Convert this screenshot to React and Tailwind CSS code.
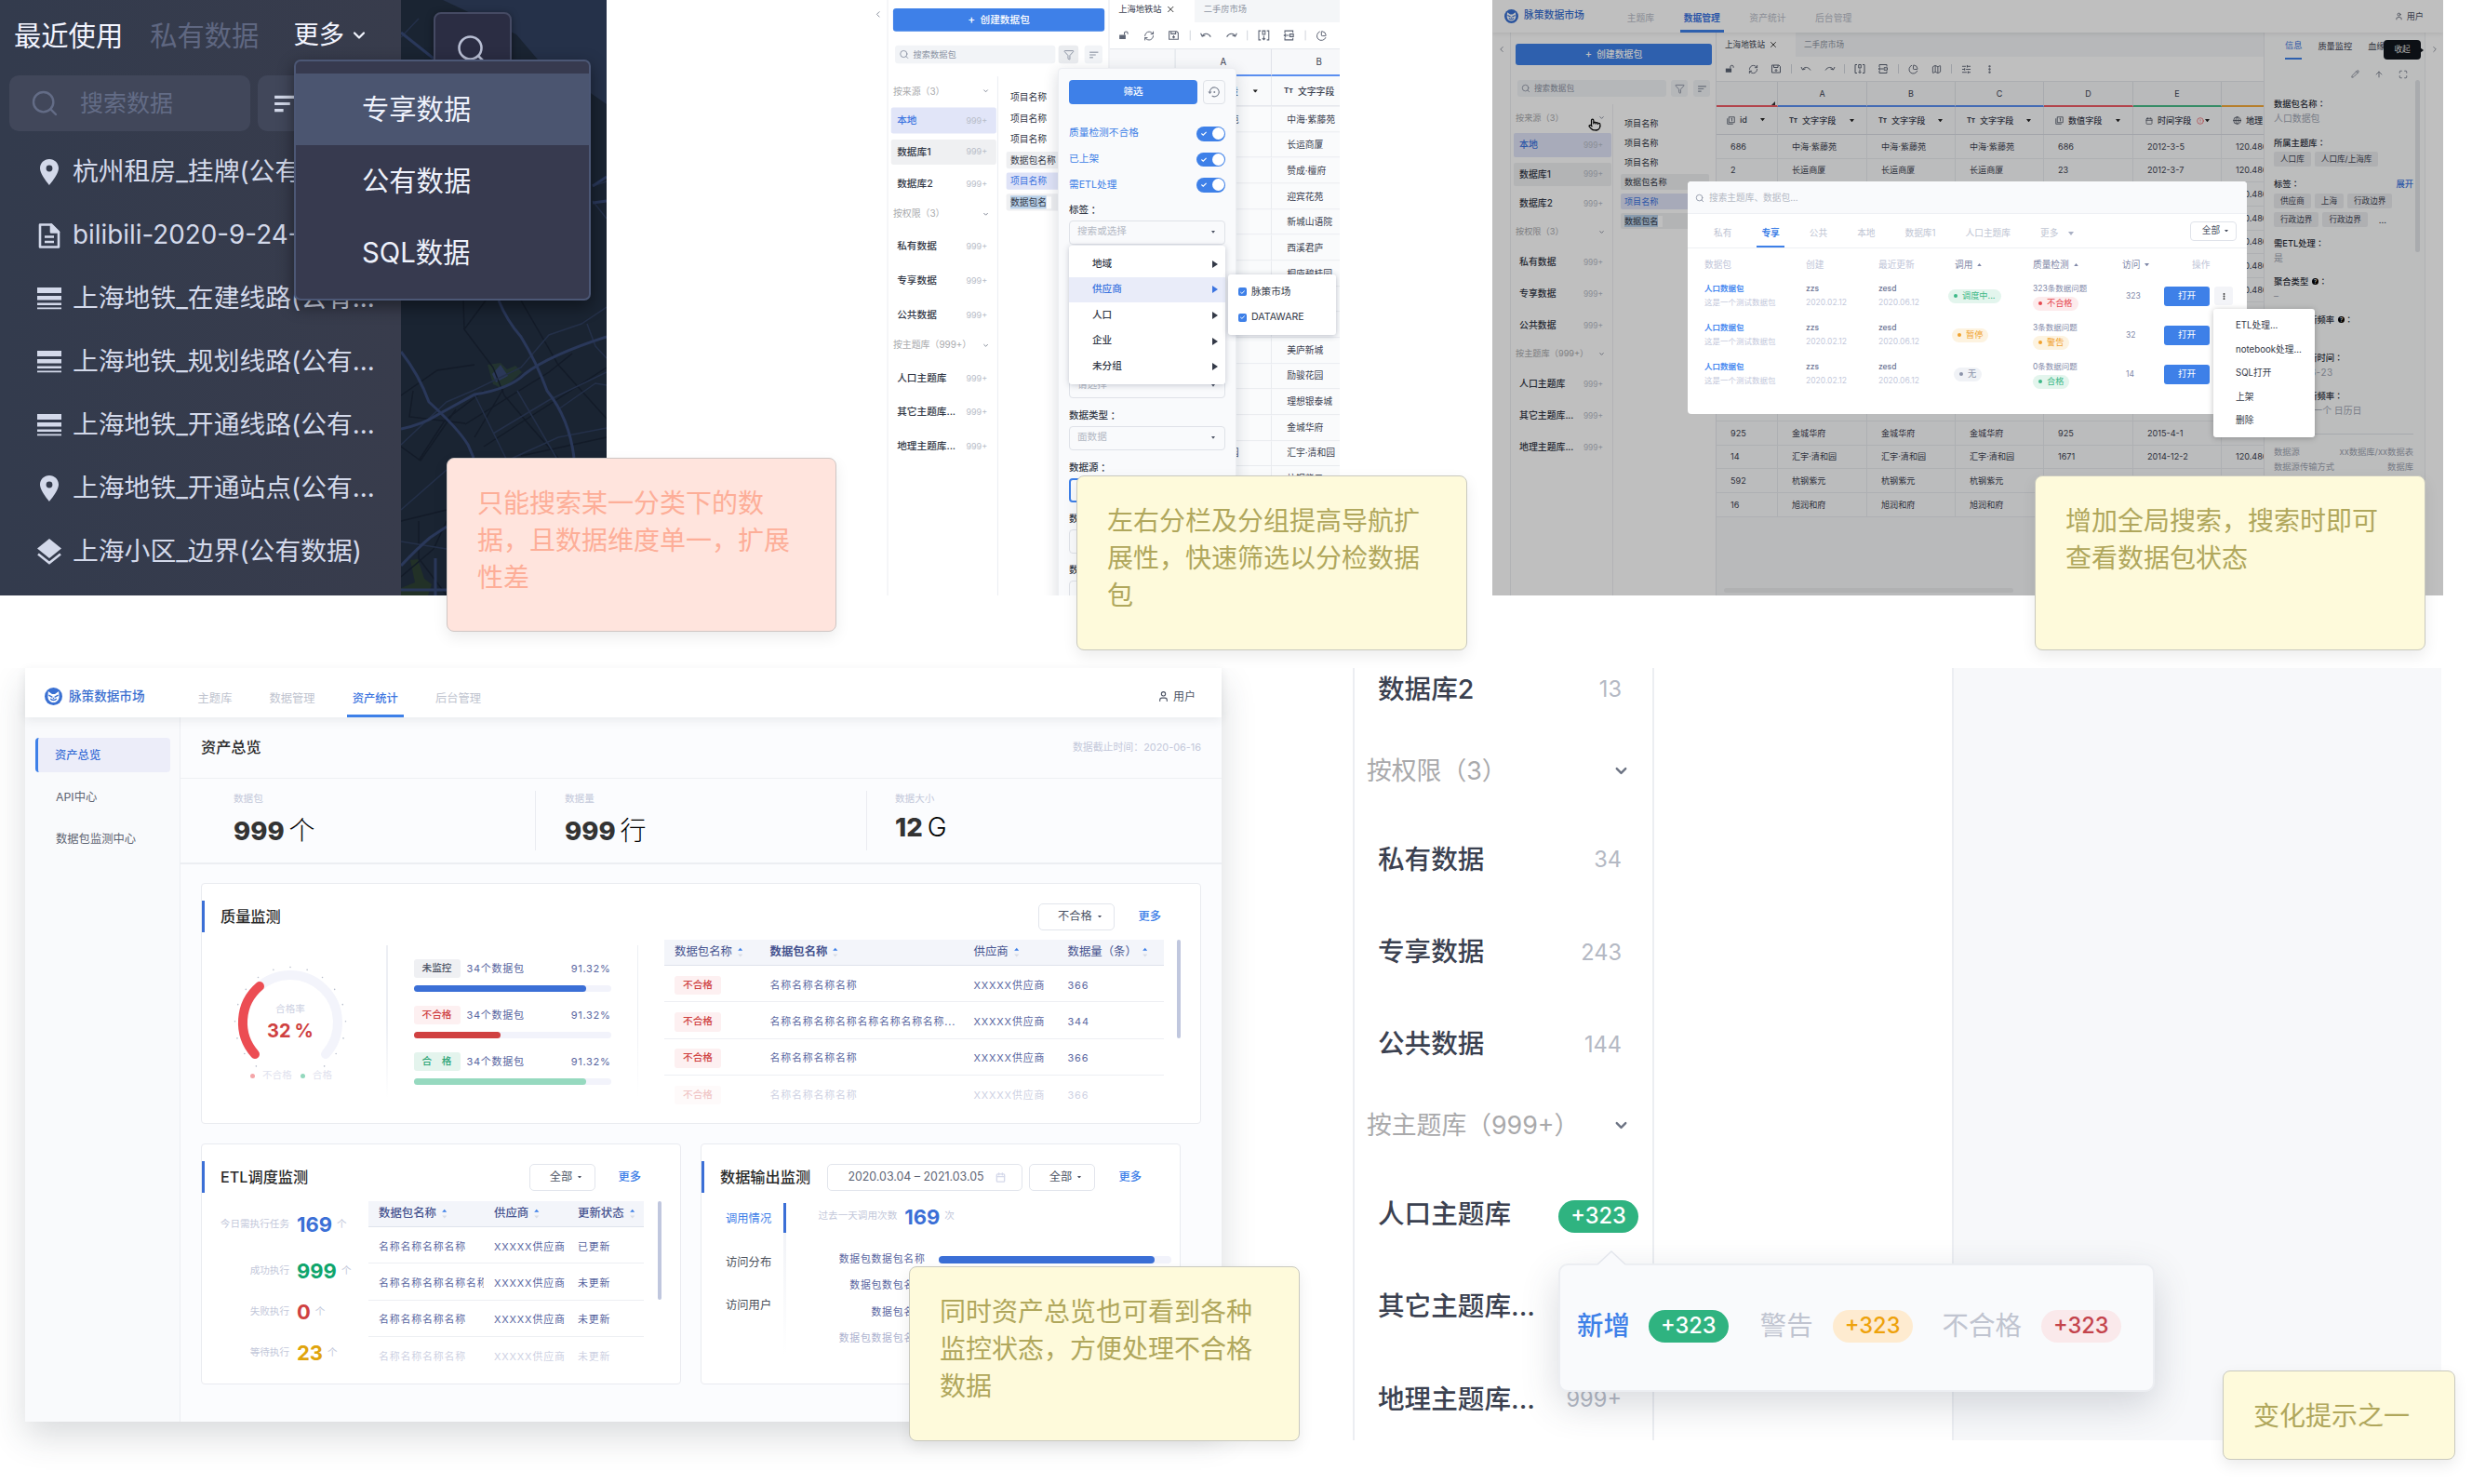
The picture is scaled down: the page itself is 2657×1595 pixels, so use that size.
import React from "react";
import {
  Search, ChevronDown, ChevronLeft, ChevronRight, RefreshCw, PieChart, Map as MapIcon,
  SlidersHorizontal, MoreVertical, Filter, User, X, Pencil, ArrowUp, Maximize, Globe, Calendar,
  CircleAlert, Pointer,
} from "lucide-react";

/* ---------- shared pieces ---------- */

function Note({ className, lines }) {
  return (
    <div className={"absolute rounded-[8px] border pl-[32px] text-[28px] leading-[40px] shadow-[0_6px_16px_rgba(0,0,0,0.08)] " + className}>
      {lines.map((l) => (
        <p key={l}>{l}</p>
      ))}
    </div>
  );
}

function Colon() {
  return <span className="font-['Noto_Sans_CJK_TC',sans-serif]">：</span>;
}

function Logo({ className }) {
  return (
    <svg viewBox="0 0 20 20" className={className}>
      <circle cx="10" cy="10" r="10" fill="#3a70d2" />
      <path d="M4 4.2 L8.4 7.4 H11.6 L16 4.2 L16.4 11 C15.8 14.8 13 16.8 10 16.8 C7 16.8 4.2 14.8 3.6 11 Z" fill="#fff" />
      <path d="M4.6 8.6 L8.8 10.8 M15.4 8.6 L11.2 10.8 M6.6 12.6 C8 14.8 12 14.8 13.4 12.6" stroke="#3a70d2" strokeWidth="1.5" fill="none" />
      <path d="M8.8 11.4 H11.2 L10 13.2 Z" fill="#3a70d2" />
    </svg>
  );
}

function Caret({ className = "w-[5px] text-[#4b5263]", up = false }) {
  return (
    <svg viewBox="0 0 6 4" className={"shrink-0 " + className}>
      <path d={up ? "M0 4 L3 0 L6 4Z" : "M0 0 L3 4 L6 0Z"} fill="currentColor" />
    </svg>
  );
}

function Sort() {
  return (
    <svg viewBox="0 0 6 12" className="ml-[6px] h-[11px] w-[5.5px] shrink-0">
      <path d="M0.2 4.2 L3 0.8 L5.8 4.2Z" fill="#3e80e8" />
      <path d="M0.2 8.2 L3 11.4 L5.8 8.2Z" fill="#d9dde6" />
    </svg>
  );
}

function SortLines({ className }) {
  return (
    <svg viewBox="0 0 20 16" className={className}>
      <path d="M0 2 H20 M0 8 H14 M0 14 H8" stroke="currentColor" strokeWidth="2.6" />
    </svg>
  );
}

function NumberIcon() {
  return (
    <svg viewBox="0 0 12 12" className="h-[9px] w-[9px] shrink-0" fill="none" stroke="#4b5263" strokeWidth="1.1">
      <path d="M3 1 H11 V9 H3Z M1 3 V11 H9 M6.2 3.4 L7.4 2.8 V7.2" />
    </svg>
  );
}

/* ---------- dark map panel ---------- */

function PinIcon() {
  return (
    <svg viewBox="0 0 20 28" className="h-[28px] w-[20px]">
      <path d="M10 0 C4.4 0 0 4.3 0 9.8 C0 16.5 10 28 10 28 C10 28 20 16.5 20 9.8 C20 4.3 15.6 0 10 0 Z M10 6.6 A3.4 3.4 0 1 1 10 13.4 A3.4 3.4 0 1 1 10 6.6 Z" fill="#d3d9ea" fillRule="evenodd" />
    </svg>
  );
}
function DocIcon() {
  return (
    <svg viewBox="0 0 24 28" className="h-[29px] w-[24px]" fill="none" stroke="#d3d9ea" strokeWidth="2.6" strokeLinejoin="round">
      <path d="M2 2 H14 L22 10 V26 H2 Z M7 15 H17 M7 20.5 H17" />
      <path d="M14 2 L22 10 H14 Z" fill="#d3d9ea" />
    </svg>
  );
}
function LinesIcon() {
  return (
    <svg viewBox="0 0 26 24" className="h-[24px] w-[26px]" fill="#d3d9ea">
      <path d="M0 0 H26 V6 H0Z M0 9 H26 V13.4 H0Z M0 16.4 H26 V19 H0Z M0 21.6 H26 V23.2 H0Z" />
    </svg>
  );
}
function LayersIcon() {
  return (
    <svg viewBox="0 0 26 28" className="h-[28px] w-[26px]">
      <path d="M13 0 L26 10.5 L13 21 L0 10.5Z" fill="#d3d9ea" />
      <path d="M1 16.5 L13 26 L25 16.5" fill="none" stroke="#d3d9ea" strokeWidth="2.6" />
    </svg>
  );
}

const LAYERS = [
  [PinIcon, "杭州租房_挂牌(公有..."],
  [DocIcon, "bilibili-2020-9-24-..."],
  [LinesIcon, "上海地铁_在建线路(公有..."],
  [LinesIcon, "上海地铁_规划线路(公有..."],
  [LinesIcon, "上海地铁_开通线路(公有..."],
  [PinIcon, "上海地铁_开通站点(公有..."],
  [LayersIcon, "上海小区_边界(公有数据)"],
];

function CityMap() {
  return (
    <svg viewBox="431 0 221 640" className="h-full w-full bg-[#1a2432]">
      <path d="M476 0 L555 37 L578 64 L606 80 L652 112 V0 Z" fill="#253149" />
      <path d="M524 392 L538 390 L545 397 L554 393 L561 400 L541 418 L530 413 Z" fill="#22332f" />
      <path d="M529 402 L538 392 L546 404 L533 411Z" fill="#2b3858" />
      <path d="M441 602 L449 601 L456 622 L464 628 L460 640 H431 V632 L446 626Z" fill="#223127" />
      <g fill="none" stroke="#131b28" strokeWidth="1.4">
        <path d="M498 323 L499 354 L530 395 L542 425 L570 458 L600 492" />
        <path d="M560 323 L600 392 L652 450 M499 354 L522 323 M541 418 L510 470 M431 425 L470 398 L510 392" />
        <path d="M444 420 L440 448 L500 455 M450 495 L478 452 L520 420 M431 480 L452 495 L490 440" />
        <path d="M520 480 L652 395 M500 456 L590 400 L615 380 M560 490 L652 470" />
        <path d="M431 620 L466 590 L480 560 M450 560 V600 L480 640 M431 560 L480 548" />
      </g>
      <g fill="none" stroke="#243049" strokeWidth="1.5">
        <path d="M431 478 L480 432 L508 420 L560 395 L590 360 L625 348 L652 330" />
        <path d="M510 424 L545 495 M556 420 L598 492 M530 466 L590 430 L652 400 M545 495 L600 470 L652 460" />
        <path d="M431 548 L480 505 M431 582 L480 590 M431 40 L450 20 M600 440 L640 412 L652 414 M631 348 L640 372 L652 385" />
        <path d="M637 200 L652 195 M637 216 L652 235" />
      </g>
      <g fill="none" stroke="#2a385a" strokeWidth="3">
        <path d="M431 378 Q450 402 461 432 Q492 460 503 478 L509 492" />
        <path d="M431 461 Q455 456 470 446 L510 424 Q548 418 564 402 Q590 382 652 362" />
        <path d="M536 323 Q545 345 560 362 Q577 390 588 420 Q612 450 617 492" />
        <path d="M431 35 L470 66 M431 608 Q448 590 462 578 L480 566 M468 600 V640 M431 634 H480 M637 218 L652 216 M637 200 L652 190" />
      </g>
    </svg>
  );
}

function MapPanel() {
  return (
    <section className="absolute left-0 top-0 flex h-[640px] w-[652px] overflow-hidden text-[#d3d9ea]">
      <div className="w-[431px] shrink-0 overflow-hidden bg-gradient-to-r from-[#333b4d] to-[#383c4c]">
        <div className="flex h-[77px] items-center pl-[15px] text-[29.3px]">
          <span className="text-[#f3f5ff]">最近使用</span>
          <span className="ml-[29px] text-[#5f6781]">私有数据</span>
          <span className="ml-[37px] flex items-center pb-[1px] text-[27.3px] text-[#f3f5ff]">
            更多
            <ChevronDown className="ml-[6px] h-[20px] w-[20px]" strokeWidth={2.6} />
          </span>
        </div>
        <div className="mt-[4px] flex gap-[8px] pl-[10px]">
          <div className="flex h-[60px] w-[259px] shrink-0 items-center rounded-[10px] bg-[#41475a] pl-[22px] text-[25px] text-[#636c86]">
            <Search className="h-[32px] w-[32px]" strokeWidth={1.8} />
            <span className="ml-[22px]">搜索数据</span>
          </div>
          <div className="flex h-[60px] w-[140px] shrink-0 items-center rounded-[10px] bg-[#41475a] pl-[17px]">
            <SortLines className="h-[19px] w-[26px]" />
          </div>
        </div>
        <div className="mt-[10px] text-[27.8px]">
          {LAYERS.map(([Icon, name]) => (
            <div key={name} className="flex h-[68px] items-center">
              <span className="ml-[39px] flex w-[27px] shrink-0 justify-center">
                <Icon />
              </span>
              <span className="ml-[12px]">{name}</span>
            </div>
          ))}
        </div>
      </div>
      <div className="min-w-0 flex-1">
        <CityMap />
      </div>
      <div className="absolute left-[466px] top-[13px] h-[84px] w-[84px] rounded-[8px] border-2 border-[#454a63] bg-[#2b2d43] pl-[21px] pt-[20px] shadow-[0_2px_8px_rgba(0,0,0,0.4)]">
        <Search className="h-[36px] w-[36px] text-[#b9bfd4]" strokeWidth={1.7} />
      </div>
      <div className="absolute left-[316px] top-[64px] h-[259px] w-[319px] rounded-[7px] border-2 border-[#4c5775] bg-[#373a4f] pt-[13px] text-[29.3px] text-[#eef1fb] shadow-[0_6px_18px_rgba(0,0,0,0.45)]">
        <div className="flex h-[77px] items-center bg-[#4b5570] pl-[71px]">专享数据</div>
        <div className="flex h-[77px] items-center pl-[71px]">公有数据</div>
        <div className="flex h-[77px] items-center pl-[71px]">SQL数据</div>
      </div>
    </section>
  );
}

/* ---------- data manager application ---------- */

const TREE = [
  { name: "按来源（3）", group: true, cls: "mt-[5px] h-[19px]" },
  { name: "本地", cls: "mt-[7px] h-[26px] bg-[#e1e5f8] text-[#3b74e0]" },
  { name: "数据库1", cls: "mt-[6px] h-[25px] bg-[#eff0f2]" },
  { name: "数据库2", cls: "mt-[6px] h-[26px]" },
  { name: "按权限（3）", group: true, cls: "mt-[7px] h-[20px]" },
  { name: "私有数据", cls: "mt-[10px] h-[26px]" },
  { name: "专享数据", cls: "mt-[8px] h-[26px]" },
  { name: "公共数据", cls: "mt-[8px] h-[26px]" },
  { name: "按主题库（999+）", group: true, cls: "mt-[7px] h-[20px]" },
  { name: "人口主题库", cls: "mt-[10px] h-[26px]" },
  { name: "其它主题库...", cls: "mt-[8px] h-[26px]" },
  { name: "地理主题库...", cls: "mt-[8px] h-[26px]" },
];

const ROWS = [
  ["686", "中海·紫藤苑", "686", "2012-3-5"],
  ["2", "长运商厦", "23", "2012-3-7"],
  ["", "赞成·檀府", "", ""],
  ["", "迎宾花苑", "", ""],
  ["", "新城山语院", "", ""],
  ["", "西溪君庐", "", ""],
  ["", "桐庐碧桂园", "", ""],
  ["", "", "", ""],
  ["", "", "", ""],
  ["", "美庐新城", "", ""],
  ["", "励骏花园", "", ""],
  ["", "理想银泰城", "", ""],
  ["925", "金城华府", "925", "2015-4-1"],
  ["14", "汇宇·清和园", "1671", "2014-12-2"],
  ["592", "杭钢紫元", "", ""],
  ["16", "旭润和府", "", ""],
];

const COLS = "grid grid-cols-[66px_96px_95px_95px_96px_95px_95px] overflow-hidden";

function LockIcon() {
  return (
    <svg viewBox="0 0 24 24" className="h-[10px] w-[10px]">
      <path d="M2 11 H17 V21 H2Z" fill="currentColor" />
      <path d="M14 11 V7 A4 4 0 0 1 22 7 V9" fill="none" stroke="currentColor" strokeWidth="2.4" />
    </svg>
  );
}

function LineIcon({ d }) {
  return (
    <svg viewBox="0 0 24 24" className="h-[12px] w-[12px]" fill="none" stroke="currentColor" strokeWidth="2">
      <path d={d} />
    </svg>
  );
}

const ICON_PATHS = {
  save: "M3 4 H18 L21 7 V20 H3Z M7 4 V9 H16 V4 M12 12 V17 M9.5 14.5 L12 17 L14.5 14.5",
  undo: "M2 8 L5 14 L11 12 M5 14 C8 7 17 7 22 15",
  redo: "M22 8 L19 14 L13 12 M19 14 C16 7 7 7 2 15",
  column: "M6 3 H2 V21 H6 M18 3 H22 V21 H18 M9.5 3 H14.5 V10 H9.5Z M12 13 V21 M9 18 L12 21 L15 18",
  row: "M4 8 V3 H20 V7 M4 16 V21 H20 V17 M14 9.5 H21 V14.5 H14Z M12 12 H2 M6 9 L2.5 12 L6 15",
};

function Toolbar() {
  const ic = "h-[11px] w-[11px]";
  const groups = [
    [<LockIcon />, <RefreshCw className={ic} />, <LineIcon d={ICON_PATHS.save} />],
    [<LineIcon d={ICON_PATHS.undo} />, <LineIcon d={ICON_PATHS.redo} />],
    [<LineIcon d={ICON_PATHS.column} />, <LineIcon d={ICON_PATHS.row} />],
    [<PieChart className={ic} />, <MapIcon className={ic} />],
    [<SlidersHorizontal className={ic} />, <MoreVertical className={ic} strokeWidth={3} />],
  ];
  return (
    <div className="flex h-[26px] shrink-0 items-center bg-white pl-[1px] text-[#5d6474]">
      {groups.map((g, i) => (
        <React.Fragment key={i}>
          {i > 0 && (
            <span className="flex w-[6.6px] shrink-0 justify-center">
              <span className="h-[10px] w-px bg-[#d5d8df]" />
            </span>
          )}
          {g.map((el, j) => (
            <span key={j} className="flex w-[25.4px] shrink-0 justify-center">
              {el}
            </span>
          ))}
        </React.Fragment>
      ))}
    </div>
  );
}

function FieldHead({ icon, label, warn = false }) {
  return (
    <div className="flex h-[29px] items-center border-r border-[#e6e8ed] pl-[12px]">
      <span className="flex w-[9px] justify-center">{icon}</span>
      <span className="ml-[5px]">{label}</span>
      {warn && <CircleAlert className="ml-[6px] h-[8px] w-[8px] text-[#ea4a51]" />}
      <Caret className={warn ? "ml-[1px] w-[5px] text-[#222]" : "ml-auto mr-[13px] w-[5px] text-[#222]"} />
    </div>
  );
}

function DataTable({ columns }) {
  const tt = <span className="text-[7.5px] font-bold">Tт</span>;
  const head = [
    ["", "border-b-[#ee5b66]"],
    ["A", "border-b-[#5b8ff0]"],
    ["B", "border-b-[#5b8ff0]"],
    ["C", "border-b-[#5b8ff0]"],
    ["D", "border-b-[#ee5b66]"],
    ["E", "border-b-[#48bb88]"],
    ["", "border-b-[#f3a93a]"],
  ].slice(0, columns);
  const fields = [
    <FieldHead key="a" icon={tt} label="文字字段" />,
    <FieldHead key="b" icon={tt} label="文字字段" />,
    <FieldHead key="c" icon={tt} label="文字字段" />,
    <FieldHead key="d" icon={<NumberIcon />} label="数值字段" />,
    <FieldHead key="e" icon={<Calendar className="h-[8px] w-[8px]" />} label="时间字段" warn />,
    <FieldHead key="f" icon={<Globe className="h-[9px] w-[9px]" />} label="地理" />,
  ].slice(0, columns - 1);
  return (
    <div className="flex flex-1 flex-col overflow-hidden bg-[#f7f8fa] text-[9.1px] text-[#3b4150]">
      <div className={COLS + " border-t border-[#e6e8ed]"}>
        {head.map(([h, c], i) => (
          <div key={i} className={"flex h-[27px] items-center justify-center border-b-[2.5px] border-r border-r-[#e0e3e9] text-[9px] " + c}>
            {h}
            {i === 0 && (
              <svg viewBox="0 0 6 6" className="ml-auto mr-[2px] mt-auto h-[4px] w-[4px]">
                <path d="M6 0 V6 H0Z" fill="#333" />
              </svg>
            )}
          </div>
        ))}
      </div>
      <div className={COLS + " border-b border-[#d9dce3] bg-[#f9fafb] font-medium"}>
        <div className="flex h-[28px] items-center border-r border-[#e6e8ed] pl-[11px]">
          <NumberIcon />
          <span className="ml-[5px]">id</span>
          <Caret className="ml-auto mr-[13px] w-[5px] text-[#222]" />
        </div>
        {fields}
      </div>
      {ROWS.map(([id, name, num, date], r) => (
        <div key={r} className={COLS}>
          {[id, name, name, name, num, date, "120.486"].slice(0, columns).map((v, i) => (
            <div key={i} className="flex h-[25.67px] items-center border-b border-r border-[#e9ebef] bg-[#fafbfc] pl-[15px]">
              {v}
            </div>
          ))}
        </div>
      ))}
      <div className="mb-[3px] ml-[8px] mt-auto h-[5px] w-[311px] rounded-full bg-[#ebecee]" />
    </div>
  );
}

function Chip({ children }) {
  return <span className="flex h-[16px] items-center rounded-[2px] bg-[#eaebee] px-[7px] text-[8.6px] text-[#3b4150]">{children}</span>;
}

function Info({ label, value, help = false, cls = "mt-[8px]" }) {
  return (
    <div className={cls}>
      <div className="flex h-[17px] items-center font-medium text-[#2b303b]">
        {label}
        {help && <span className="ml-[4px] flex h-[7px] w-[7px] items-center justify-center rounded-full bg-black text-[6px] text-white">?</span>}
        <Colon />
      </div>
      <div className="flex h-[16px] items-center text-[9.9px] text-[#a0a6b3]">{value}</div>
    </div>
  );
}

function InfoPanel() {
  return (
    <aside className="flex w-[173px] shrink-0 overflow-hidden border-l border-[#e6e8ed] bg-[#fbfcfd] pl-[10px] text-[9.3px]">
      <div className="w-[152px] shrink-0">
        <div className="flex h-[29px] text-[9.2px] text-[#3b4150]">
          <span className="ml-[12px] flex items-center border-b-2 border-[#3e80e8] text-[#3b74e0]">信息</span>
          <span className="ml-[17px] flex items-center">质量监控</span>
          <span className="ml-[17px] flex items-center">血缘</span>
        </div>
        <div className="flex h-[31px] items-center justify-end gap-[16px] pr-[8px] text-[#6c7383]">
          <Pencil className="h-[9px] w-[9px]" />
          <ArrowUp className="h-[10px] w-[10px]" />
          <Maximize className="h-[10px] w-[10px]" />
        </div>
        <Info cls="mt-[8px]" label="数据包名称" value="人口数据包" />
        <div className="mt-[9px] flex h-[17px] items-center font-medium text-[#2b303b]">所属主题库<Colon /></div>
        <div className="mt-[1px] flex gap-[4px]">
          <Chip>人口库</Chip>
          <Chip>人口库/上海库</Chip>
        </div>
        <div className="mt-[10px] flex h-[17px] items-center justify-between font-medium text-[#2b303b]">
          <span>标签<Colon /></span>
          <span className="pr-[2px] text-[#3b74e0]">展开</span>
        </div>
        <div className="mt-[2px] flex gap-[4px]">
          <Chip>供应商</Chip>
          <Chip>上海</Chip>
          <Chip>行政边界</Chip>
        </div>
        <div className="mt-[4px] flex gap-[4px]">
          <Chip>行政边界</Chip>
          <Chip>行政边界</Chip>
          <span className="ml-[8px] mt-[4px] text-[#3b4150]">...</span>
        </div>
        <Info cls="mt-[9px]" label="需ETL处理" value="是" />
        <Info label="聚合类型" help value="–" />
        <Info label="数据包更新频率" help value="" />
        <Info label="数据包更新时间" value={<span className="tracking-[0.6px]">2020-06-23</span>} />
        <Info label="数据包更新频率" value="更新间隔 一个 日历日" />
        <div className="mr-[2px] mt-[16px] border-t border-[#dfe2e8] pt-[11px] text-[#a0a6b3]">
          <div className="flex h-[15.5px] items-center justify-between">
            <span>数据源</span>
            <span>xx数据库/xx数据表</span>
          </div>
          <div className="flex h-[15.5px] items-center justify-between">
            <span>数据源传输方式</span>
            <span>数据库</span>
          </div>
        </div>
      </div>
      <div className="mt-[51px] h-[185px] w-[5px] rounded-full bg-[#e2e4e8]" />
    </aside>
  );
}

/* compact: workspace only, without the site header and the details column */
function DataApp({ compact = false }) {
  const nav = ["主题库", "数据管理", "资产统计", "后台管理"];
  return (
    <div className={"isolate flex flex-col overflow-hidden bg-white " + (compact ? "h-[605px] w-[471px]" : "h-[640px] w-[1022px]")}>
      {!compact && (
        <header className="z-10 flex h-[35px] shrink-0 items-center bg-white pl-[13px] pr-[21px] shadow-[0_1px_5px_rgba(0,0,0,0.1)]">
          <Logo className="h-[15px] w-[15px]" />
          <span className="ml-[6px] text-[10.8px] font-medium text-[#3a6fd0]">脉策数据市场</span>
          <nav className="ml-[42px] flex h-full gap-[23.5px] text-[9.8px]">
            {nav.map((n, i) => (
              <span
                key={n}
                className={
                  "flex items-center border-b-[3px] px-[4px] pt-[8px] " +
                  (i === 1 ? "border-[#3e80e8] font-bold text-[#3b74e0]" : "border-transparent text-[#b9bdc9]")
                }
              >
                {n}
              </span>
            ))}
          </nav>
          <span className="ml-auto flex items-center gap-[4px] text-[9.2px] text-[#4b5263]">
            <User className="h-[9px] w-[9px]" />
            用户
          </span>
        </header>
      )}
      <div className="flex min-h-0 flex-1">
        <div className="flex w-[20px] shrink-0 justify-center border-r border-[#eceef2] pt-[13px]">
          <ChevronLeft className="h-[10px] w-[10px] text-[#7d8493]" />
        </div>
        <div className="flex w-[221px] shrink-0 flex-col border-r border-[#e6e8ed]">
          <div className="ml-[5px] mt-[12px] flex h-[23px] w-[211px] items-center justify-center gap-[5px] rounded-[3px] bg-[#3e80e8] text-[9.9px] font-medium text-white">
            <span className="text-[11px]">+</span>创建数据包
          </div>
          <div className={"ml-[7px] flex h-[18px] text-[#8b93a3] " + (compact ? "mt-[14px]" : "mt-[16px]")}>
            <div className="flex w-[160px] items-center rounded-[3px] bg-[#f2f4f7] pl-[4px] text-[8.6px]">
              <Search className="mr-[4px] h-[10px] w-[10px]" />
              搜索数据包
            </div>
            <div className={"flex items-center justify-center rounded-[3px] " + (compact ? "ml-[3px] w-[20px] bg-[#eaecef]" : "ml-[5px] w-[18px] bg-[#f2f4f7]")}>
              <Filter className="h-[11px] w-[11px]" />
            </div>
            <div className="ml-[6px] flex w-[18px] items-center justify-center rounded-[3px] bg-[#f2f4f7]">
              <SortLines className="h-[7px] w-[9px]" />
            </div>
          </div>
          <div className={"flex min-h-0 flex-1 " + (compact ? "mt-[13px]" : "mt-[8px]")}>
            <div className="w-[110px] shrink-0 border-r border-[#eceef2] text-[9.9px] font-medium text-[#333947]">
              {TREE.map((t) =>
                t.group ? (
                  <div key={t.name} className={"flex items-center justify-between pl-[5px] pr-[8px] text-[9.2px] font-normal text-[#a9aaad] " + t.cls}>
                    {t.name}
                    <ChevronDown className="h-[7px] w-[7px] text-[#7d8493]" strokeWidth={3} />
                  </div>
                ) : (
                  <div key={t.name} className={"ml-[3px] mr-[1px] flex items-center justify-between rounded-[2px] pl-[6px] pr-[9px] " + t.cls}>
                    {t.name}
                    <span className="text-[8.4px] font-normal text-[#b8bdc8]">999+</span>
                  </div>
                )
              )}
            </div>
            <div className="flex flex-1 flex-col gap-[4px] pl-[8px] pr-[7px] pt-[12px] text-[9.1px] text-[#333947]">
              <div className="flex h-[17px] items-center pl-[4px]">项目名称</div>
              <div className="flex h-[17px] items-center pl-[4px]">项目名称</div>
              <div className="flex h-[17px] items-center pl-[4px]">项目名称</div>
              <div className="flex h-[17px] items-center rounded-[2px] bg-[#eff0f2] pl-[4px]">数据包名称</div>
              <div className="flex h-[17px] items-center rounded-[2px] bg-[#dfe3f7] pl-[4px] text-[#3b74e0]">项目名称</div>
              <div className="flex h-[17px] items-center rounded-[2px] bg-[#eff0f2] pl-[4px]">
                <span className="bg-[#b8d0e8] py-[2px]">数据包名</span>
                <span className="h-[12px] w-[5px] bg-white" />
              </div>
            </div>
          </div>
        </div>
        <div className={"flex flex-col overflow-hidden " + (compact ? "w-[230px] shrink-0" : "w-[588px] shrink-0")}>
          <div className="flex h-[26px] shrink-0 text-[8.6px]">
            <div className="flex w-[85px] items-center bg-white pl-[9px] text-[#3b4150]">
              上海地铁站
              <X className="ml-[4px] h-[10px] w-[10px] text-[#222]" />
            </div>
            <div className="flex flex-1 items-center bg-[#f4f6f8] pl-[9px] text-[#8e95a3]">二手房市场</div>
          </div>
          <Toolbar />
          <DataTable columns={compact ? 3 : 7} />
        </div>
        {!compact && (
          <>
            <InfoPanel />
            <div className="flex flex-1 justify-center border-l border-[#eceef2] pt-[13px]">
              <ChevronRight className="h-[10px] w-[10px] text-[#7d8493]" />
            </div>
          </>
        )}
      </div>
    </div>
  );
}

/* ---------- filter popover ---------- */

function Toggle({ label }) {
  return (
    <div className="flex h-[27.6px] items-center justify-between text-[10.7px] text-[#3b7de6]">
      {label}
      <span className="flex h-[15.5px] w-[31px] items-center justify-between rounded-full bg-[#3e80e8] pl-[5px] pr-[1px]">
        <svg viewBox="0 0 8 6" className="h-[5px] w-[6px]">
          <path d="M0.5 3 L3 5.2 L7.5 0.8" fill="none" stroke="#fff" strokeWidth="1.6" />
        </svg>
        <span className="h-[13px] w-[13px] rounded-full bg-white" />
      </span>
    </div>
  );
}

function FilterField({ label, value, active = false, cls = "mt-[7px]" }) {
  return (
    <div className={cls}>
      <div className="flex h-[22px] items-center text-[10.5px] font-medium text-[#333947]">
        {label}
        {label && <Colon />}
      </div>
      <div className={"flex h-[26px] items-center justify-between rounded-[4px] border bg-[#f9fafc] pl-[8px] pr-[10px] text-[10.6px] text-[#b4b9c4] " + (active ? "border-2 border-[#3e80e8]" : "border-[#dfe2e8]")}>
        {value}
        <Caret className="ml-auto w-[4px] text-[#4b5263]" />
      </div>
    </div>
  );
}

function FilterPanel() {
  const opts = ["地域", "供应商", "人口", "企业", "未分组"];
  return (
    <section className="absolute left-[933px] top-0 h-[640px] w-[507px] overflow-hidden bg-white">
      <div className="-mt-[4px] origin-top-left scale-[1.077]">
        <DataApp compact />
      </div>
      <div className="absolute left-[204px] top-[73px] h-[600px] w-[192px] rounded-[4px] border border-[#eceef2] bg-[#f9fafc] px-[11px] pt-[12px] shadow-[0_4px_16px_rgba(40,50,80,0.18)]">
        <div className="flex h-[26px] gap-[6px]">
          <div className="flex w-[138px] items-center justify-center rounded-[4px] bg-[#3e80e8] text-[10.6px] font-medium text-white">筛选</div>
          <div className="flex flex-1 items-center justify-center rounded-[4px] border border-[#dfe2e8] text-[#7d8493]">
            <svg viewBox="0 0 24 24" className="h-[14px] w-[14px]">
              <path d="M4 12 A8.5 8.5 0 1 1 8 19" fill="none" stroke="currentColor" strokeWidth="1.9" />
              <path d="M0.5 11 H8 L4.2 15.6Z" fill="currentColor" />
              <circle cx="12.5" cy="12" r="1.7" fill="currentColor" />
            </svg>
          </div>
        </div>
        <div className="mt-[18px]">
          <Toggle label="质量检测不合格" />
          <Toggle label="已上架" />
          <Toggle label="需ETL处理" />
        </div>
        <FilterField label="标签" value="搜索或选择" cls="mt-[2px]" />
        <FilterField label="" value="请选择" cls="mt-[117px]" />
        <FilterField label="数据类型" value="面数据" cls="mt-[8px]" />
        <FilterField label="数据源" value="" active cls="mt-[8px]" />
        <FilterField label="数" value="" />
        <FilterField label="数" value="" />
      </div>
      <div className="absolute left-[216px] top-[264px] h-[149px] w-[168px] rounded-[3px] bg-white pt-[6px] text-[10.6px] font-medium text-[#333947] shadow-[0_1px_6px_rgba(40,50,80,0.25)]">
        {opts.map((o, i) => (
          <div key={o} className={"flex h-[27.6px] items-center justify-between pl-[25px] pr-[8px] " + (i === 1 ? "bg-[#e9ecf9] text-[#3b74e0]" : "")}>
            {o}
            <svg viewBox="0 0 6 8" className="h-[8px] w-[6px]">
              <path d="M0 0 L6 4 L0 8Z" fill="currentColor" />
            </svg>
          </div>
        ))}
      </div>
      <div className="absolute left-[387px] top-[295px] h-[65px] w-[116px] rounded-[3px] bg-white pl-[11px] pt-[5px] text-[10.6px] text-[#333947] shadow-[0_1px_6px_rgba(40,50,80,0.3)]">
        {["脉策市场", "DATAWARE"].map((o) => (
          <div key={o} className="flex h-[27.6px] items-center gap-[5px]">
            <span className="flex h-[9px] w-[9px] items-center justify-center rounded-[2px] bg-[#3e80e8]">
              <svg viewBox="0 0 8 6" className="h-[4px] w-[5px]">
                <path d="M0.5 3 L3 5.2 L7.5 0.8" fill="none" stroke="#fff" strokeWidth="1.6" />
              </svg>
            </span>
            {o}
          </div>
        ))}
      </div>
    </section>
  );
}

/* ---------- global search panel ---------- */

function Pill({ children, cls }) {
  return (
    <span className={"inline-flex h-[15px] items-center gap-[5px] rounded-full px-[6px] text-[9.2px] " + cls}>
      <span className="h-[4px] w-[4px] rounded-full bg-current" />
      {children}
    </span>
  );
}

const RESULTS = [
  { t: "调度中...", tc: "-ml-[1px] bg-[#e3f5ed] text-[#3db887]", n: "323条数据问题", q: "不合格", qc: "bg-[#fdebec] text-[#e5484f]", v: "323", menu: true },
  { t: "暂停", tc: "ml-[3px] bg-[#fdf3e0] text-[#f0a22e]", n: "3条数据问题", q: "警告", qc: "bg-[#fdf3e0] text-[#f0a22e]", v: "32" },
  { t: "无", tc: "ml-[5px] bg-[#f0f2f6] text-[#8b93a9]", n: "0条数据问题", q: "合格", qc: "bg-[#e3f5ed] text-[#3db887]", v: "14" },
];

const RCOLS = "grid grid-cols-[109px_78px_76px_90px_98px_43px_1fr]";

function SearchModal() {
  const tabs = ["私有", "专享", "公共", "本地", "数据库1", "人口主题库", "更多"];
  return (
    <div className="absolute left-[210px] top-[195px] h-[250px] w-[601px] overflow-hidden rounded-[4px] bg-white text-[9.7px]">
      <div className="flex h-[35px] items-center border-b border-[#eef0f4] bg-[#f9fafc] pl-[8px] pt-[1px] text-[#b4b9c4]">
        <Search className="mr-[5px] h-[10px] w-[10px] text-[#8b93a3]" />
        搜索主题库、数据包...
      </div>
      <div className="flex h-[37px] items-center border-b border-[#eef0f4] pl-[23px] pr-[11px]">
        {tabs.map((t, i) => (
          <span
            key={t}
            className={
              "mr-[22px] flex h-full items-center border-b-2 px-[5px] pt-[7px] " +
              (i === 1 ? "border-[#3e80e8] font-bold text-[#3b7de6]" : "border-transparent text-[#c0c5d3]")
            }
          >
            {t}
            {i === 6 && <Caret className="ml-[11px] w-[6px] text-[#a9b0c4]" />}
          </span>
        ))}
        <span className="ml-auto flex h-[21px] w-[50px] items-center justify-center gap-[5px] rounded-[4px] border border-[#e0e3ea] pl-[4px] text-[#4b5263]">
          全部 <Caret className="w-[4px]" />
        </span>
      </div>
      <div className={RCOLS + " mt-[5px] h-[25px] items-center pl-[18px] text-[#c0c5d8]"}>
        <span>数据包</span>
        <span>创建</span>
        <span>最近更新</span>
        <span className="flex items-center gap-[5px] pl-[6px] text-[#7f88a8]">调用 <Caret up className="w-[5px]" /></span>
        <span className="flex items-center gap-[5px] text-[#7f88a8]">质量检测 <Caret up className="w-[5px]" /></span>
        <span className="-ml-[2px] flex items-center gap-[5px] text-[#7f88a8]">访问 <Caret className="w-[5px]" /></span>
        <span className="pl-[30px]">操作</span>
      </div>
      {RESULTS.map((r) => (
        <div key={r.n} className={RCOLS + " h-[42px] items-center pl-[18px] text-[8.5px]"}>
          <div className="leading-[15px]">
            <p className="font-bold text-[#4a8af0]">人口数据包</p>
            <p className="text-[#c3c8db]">这是一个测试数据包</p>
          </div>
          <div className="leading-[15px] text-[#c3c8db]">
            <p className="font-medium text-[#6a7394]">zzs</p>
            <p>2020.02.12</p>
          </div>
          <div className="leading-[15px] text-[#c3c8db]">
            <p className="font-medium text-[#6a7394]">zesd</p>
            <p>2020.06.12</p>
          </div>
          <div>
            <Pill cls={r.tc}>{r.t}</Pill>
          </div>
          <div className="flex flex-col items-start gap-[2px] leading-[14px] text-[#7f88a8]">
            {r.n}
            <Pill cls={r.qc}>{r.q}</Pill>
          </div>
          <div className="pl-[2px] text-[#7f88a8]">{r.v}</div>
          <div className="flex items-center gap-[5px]">
            <span className="flex h-[21px] w-[49px] items-center justify-center rounded-[3px] bg-[#3e80e8] text-[9.6px] text-white">打开</span>
            {r.menu && (
              <span className="flex h-[20px] w-[20px] items-center justify-center rounded-[3px] bg-[#f3f4f8]">
                <MoreVertical className="h-[9px] w-[9px] text-[#222]" strokeWidth={3} />
              </span>
            )}
          </div>
        </div>
      ))}
    </div>
  );
}

function SearchPanel() {
  return (
    <section className="absolute left-[1604px] top-0 h-[640px] w-[1022px]">
      <DataApp />
      <div className="absolute left-[958px] top-[43px] flex h-[21px] w-[40px] items-center justify-center rounded-[4px] bg-[#11161d] text-[8.6px] text-[#e6e6e6]">
        收起
      </div>
      <svg viewBox="0 0 4 6" className="absolute left-[997px] top-[51px] h-[6px] w-[4px]">
        <path d="M0 0 L4 3 L0 6Z" fill="#11161d" />
      </svg>
      <Pointer className="absolute left-[103px] top-[127px] h-[14px] w-[14px] text-black" fill="#fff" />
      <div className="absolute inset-0 bg-black/25" />
      <SearchModal />
      <div className="absolute left-[775px] top-[332px] h-[138px] w-[109px] rounded-[3px] bg-white pl-[24px] pt-[5px] text-[9.7px] text-[#333947] shadow-[0_1px_6px_rgba(0,0,0,0.25)]">
        {["ETL处理...", "notebook处理...", "SQL打开", "上架", "删除"].map((m) => (
          <div key={m} className="flex h-[25.6px] items-center">
            {m}
          </div>
        ))}
      </div>
    </section>
  );
}

/* ---------- asset dashboard ---------- */

function CardTitle({ children, right }) {
  return (
    <div className="flex h-[34px] items-center border-l-[3.5px] border-[#3b6fd6] pl-[17px]">
      <span className="text-[16.2px] font-medium text-[#2a2a2a]">{children}</span>
      {right}
    </div>
  );
}

function Select({ children, cls }) {
  return (
    <span className={"flex h-[29px] items-center rounded-[5px] border border-[#e2e5ec] text-[12.2px] text-[#4b5263] " + cls}>
      {children}
      <Caret className="ml-[6px] w-[4px]" />
    </span>
  );
}

function Tag({ children, cls }) {
  return <span className={"flex h-[20.5px] w-[50px] items-center justify-center rounded-[3px] text-[10.7px] font-medium " + cls}>{children}</span>;
}

function FadeLine({ cls }) {
  return <div className={"w-[1.5px] shrink-0 bg-gradient-to-b from-[#edeff4] via-[#edeff4] to-transparent " + cls} />;
}

function Stat({ label, value, unit, cls, rowCls }) {
  return (
    <div className={cls}>
      <p className="text-[10.6px] text-[#c3c8da]">{label}</p>
      <p className={"flex items-center gap-[5px] leading-[28px] " + rowCls}>
        <span className="text-[27.5px] font-extrabold text-[#333]">{value}</span>
        <span className="text-[28px] font-light text-black">{unit}</span>
      </p>
    </div>
  );
}

const BARS = [
  ["未监控", "bg-[#eff0f3] text-[#4b5263]", "w-[185px] bg-[#3b6fd6]"],
  ["不合格", "bg-[#fdf0f1] text-[#cf4141]", "w-[93px] bg-[#d04141]"],
  ["合　格", "bg-[#e4f4ed] text-[#2ea577]", "w-[185px] bg-[#96d9bf]"],
];

const NAMES = ["名称名称名称名称", "名称名称名称名称名称名称名称名称...", "名称名称名称名称", "名称名称名称名称"];
const ROW_LINE = " h-[39.3px] items-center border-b border-[#edeff3] pt-[4px] tracking-[0.85px] text-[10.9px] text-[#5865a0]";

function QualityCard() {
  const grid = "grid grid-cols-[102.5px_219px_101px_1fr] pl-[11px]";
  const ticks = Array.from({ length: 17 }, (_, i) => ((-232 + i * 17.75) * Math.PI) / 180);
  return (
    <div className="h-[259px] w-[1075px] rounded-[4px] border border-[#e9ebf0] bg-white pt-[18px]">
      <CardTitle
        right={
          <>
            <Select cls="ml-auto w-[82px] justify-center pl-[6px]">不合格</Select>
            <span className="ml-[25px] mr-[42px] text-[12.3px] font-medium text-[#3e80e8]">更多</span>
          </>
        }
      >
        质量监测
      </CardTitle>
      <div className="mt-[8px] flex">
        <div className="relative flex w-[198px] shrink-0 flex-col items-center pt-[27px]">
          <svg viewBox="0 0 124 124" className="ml-[-8px] h-[124px] w-[124px]">
            <path d="M24 96 A51 51 0 1 1 100 96" fill="none" stroke="#f3f4fb" strokeWidth="10" strokeLinecap="round" />
            <path d="M24 96 A51 51 0 0 1 29 23" fill="none" stroke="#ec4d53" strokeWidth="10" strokeLinecap="round" />
            {ticks.map((a) => (
              <circle key={a} cx={62 + 59.5 * Math.cos(a)} cy={62 + 59.5 * Math.sin(a)} r="0.8" fill="#b9bfcc" />
            ))}
          </svg>
          <div className="absolute inset-x-0 top-[70px] ml-[-8px] flex flex-col items-center">
            <span className="text-[10.6px] text-[#cdd1e2]">合格率</span>
            <span className="mt-[7px] text-[20px] font-bold leading-[20px] text-[#cf4141]">
              32<span className="ml-[4px]">%</span>
            </span>
          </div>
          <div className="ml-[-6px] mt-[-10px] flex items-center text-[10.6px] text-[#dfe2ee]">
            <span className="mr-[8px] h-[5px] w-[5px] rounded-full bg-[#f4a5a8]" />
            不合格
            <span className="ml-[9px] mr-[8px] h-[5px] w-[5px] rounded-full bg-[#93d8bd]" />
            合格
          </div>
        </div>
        <FadeLine cls="mt-[6px] h-[164px]" />
        <div className="w-[268px] shrink-0 pl-[28px] pt-[21px]">
          {BARS.map(([t, c, w]) => (
            <div key={t} className="h-[50px] w-[212px]">
              <div className="flex h-[20px] items-center tracking-[0.7px] text-[11px] text-[#5865a0]">
                <Tag cls={c + " tracking-normal"}>{t}</Tag>
                <span className="ml-[7px]">34个数据包</span>
                <span className="ml-auto">91.32%</span>
              </div>
              <div className="mt-[8px] h-[7px] rounded-full bg-[#f2f3fb]">
                <div className={"h-full rounded-full " + w} />
              </div>
            </div>
          ))}
        </div>
        <FadeLine cls="mt-[6px] h-[164px]" />
        <div className="ml-[28px] w-[537px] shrink-0">
          <div className={grid + " h-[28px] items-center border-b border-[#dfe3ec] bg-[#f3f5fa] text-[12.4px] text-[#46538f]"}>
            <span className="flex items-center">数据包名称<Sort /></span>
            <span className="flex items-center font-bold">数据包名称<Sort /></span>
            <span className="flex items-center">供应商<Sort /></span>
            <span className="flex items-center">数据量（条）<Sort /></span>
          </div>
          {NAMES.map((n, i) => (
            <div key={i} className={grid + ROW_LINE + (i === 3 ? " border-transparent opacity-30" : "")}>
              <Tag cls="bg-[#fdf0f1] tracking-normal text-[#cf4141]">不合格</Tag>
              <span>{n}</span>
              <span>XXXXX供应商</span>
              <span>{i === 1 ? "344" : "366"}</span>
            </div>
          ))}
        </div>
        <div className="ml-[14px] h-[106px] w-[3.5px] rounded-full bg-[#c0c7de]" />
      </div>
    </div>
  );
}

function EtlCard() {
  const grid = "grid grid-cols-[124px_90px_1fr] pl-[11px]";
  const stats = [
    ["今日需执行任务", "169", "text-[#3b6fd6]", "h-[50px]"],
    ["成功执行", "999", "text-[#0fa56c]", "h-[50px]"],
    ["失败执行", "0", "text-[#cf4141]", "h-[38px]"],
    ["等待执行", "23", "text-[#e0a40c]", "h-[50px]"],
  ];
  return (
    <div className="h-[259px] w-[516px] rounded-[4px] border border-[#e9ebf0] bg-white pt-[18px]">
      <CardTitle
        right={
          <>
            <Select cls="ml-auto w-[71px] justify-center pl-[6px]">全部</Select>
            <span className="ml-[24px] mr-[42px] text-[12.3px] font-medium text-[#3e80e8]">更多</span>
          </>
        }
      >
        ETL调度监测
      </CardTitle>
      <div className="mt-[9px] flex">
        <div className="w-[179px] shrink-0">
          {stats.map(([l, v, c, h]) => (
            <div key={l} className={"flex items-center text-[10.6px] text-[#c3c8da] " + h}>
              <span className="w-[94px] text-right">{l}</span>
              <span className={"ml-[8px] text-[22px] font-bold " + c}>{v}</span>
              <span className="ml-[5px]">个</span>
            </div>
          ))}
        </div>
        <div className="w-[296px] shrink-0">
          <div className={grid + " h-[28px] items-center border-b border-[#dfe3ec] bg-[#f3f5fa] text-[12.4px] font-medium text-[#46538f]"}>
            <span className="flex items-center">数据包名称<Sort /></span>
            <span className="flex items-center">供应商<Sort /></span>
            <span className="flex items-center">更新状态<Sort /></span>
          </div>
          {[NAMES[0], "名称名称名称名称名称名称", NAMES[0], NAMES[0]].map((n, i) => (
            <div key={i} className={grid + ROW_LINE + (i === 3 ? " border-transparent opacity-30" : "")}>
              <span className="w-[113px] overflow-hidden py-[3px]">{n}</span>
              <span>XXXXX供应商</span>
              <span>{i === 0 ? "已更新" : "未更新"}</span>
            </div>
          ))}
        </div>
        <div className="ml-[15px] h-[106px] w-[3.5px] rounded-full bg-[#c0c7de]" />
      </div>
    </div>
  );
}

function OutputCard() {
  return (
    <div className="h-[259px] w-[516px] rounded-[4px] border border-[#e9ebf0] bg-white pt-[18px]">
      <CardTitle
        right={
          <>
            <span className="ml-auto flex h-[29px] w-[210px] items-center rounded-[5px] border border-[#e2e5ec] pl-[21px] text-[12.4px] text-[#5d6474]">
              2020.03.04 – 2021.03.05
              <Calendar className="ml-auto mr-[17px] h-[11px] w-[11px] text-[#d5d9ea]" strokeWidth={3} />
            </span>
            <Select cls="ml-[7px] w-[71px] justify-center pl-[6px]">全部</Select>
            <span className="ml-[25px] mr-[41px] text-[12.3px] font-medium text-[#3e80e8]">更多</span>
          </>
        }
      >
        数据输出监测
      </CardTitle>
      <div className="mt-[4px] flex">
        <div className="w-[88px] shrink-0 pl-[26px] pt-[1px] text-[12.3px] text-[#4a4f5a]">
          <div className="flex h-[46.5px] items-center text-[#3e80e8]">调用情况</div>
          <div className="flex h-[46.5px] items-center">访问分布</div>
          <div className="flex h-[46.5px] items-center">访问用户</div>
        </div>
        <div className="mt-[7px] h-[163px] w-[2.5px] shrink-0 bg-gradient-to-b from-[#eef0f5] to-transparent">
          <div className="h-[32px] bg-[#3b6fd6]" />
        </div>
        <div className="w-[415px] shrink-0 pl-[35px]">
          <div className="flex h-[42px] items-center pt-[1px] text-[10.6px] text-[#c3c8da]">
            过去一天调用次数
            <span className="ml-[8px] text-[22px] font-bold text-[#3b6fd6]">169</span>
            <span className="ml-[5px]">次</span>
          </div>
          <div className="mt-[12px] text-[10.8px] tracking-[0.8px] text-[#5865a0]">
            {["数据包数据包名称", "数据包数包名称", "数据包名称", "数据包数据包名称"].map((n, i) => (
              <div key={i} className={"flex h-[28.4px] items-center " + (i === 3 ? "opacity-50" : "")}>
                <span className="w-[115px] text-right">{n}</span>
                <span className="ml-[14px] h-[7.5px] w-[250px] rounded-full bg-[#f2f3fb]">
                  <span className="block h-full w-[232px] rounded-full bg-[#3b6fd6]" />
                </span>
              </div>
            ))}
          </div>
        </div>
      </div>
    </div>
  );
}

function Dashboard() {
  const nav = ["主题库", "数据管理", "资产统计", "后台管理"];
  return (
    <section className="absolute left-[27px] top-[718px] flex h-[810px] w-[1286px] flex-col bg-white shadow-[0_16px_34px_rgba(50,62,72,0.18)]">
      <div className="absolute -left-[27px] -right-[50px] -top-[20px] h-[20px] bg-white" />
      <header className="z-10 flex h-[53px] shrink-0 items-center bg-white pl-[21px] pr-[28px] shadow-[0_3px_10px_rgba(40,50,70,0.09)]">
        <Logo className="mt-[7px] h-[19px] w-[19px]" />
        <span className="ml-[7px] mt-[8px] text-[13.6px] font-medium text-[#3a6fd0]">脉策数据市场</span>
        <nav className="ml-[51px] flex h-full gap-[28px] text-[12.3px]">
          {nav.map((n, i) => (
            <span
              key={n}
              className={
                "flex items-center border-b-[3px] px-[6px] pt-[17px] " +
                (i === 2 ? "border-[#3e80e8] font-medium text-[#3b74e0]" : "border-transparent text-[#c0c4cf]")
              }
            >
              {n}
            </span>
          ))}
        </nav>
        <span className="ml-auto mt-[8px] flex items-center gap-[4px] text-[12px] text-[#4b5263]">
          <User className="h-[13px] w-[13px]" />
          用户
        </span>
      </header>
      <div className="flex min-h-0 flex-1">
        <aside className="w-[167px] shrink-0 border-r border-[#eceef2] bg-[#f9fafc] pl-[11px] pt-[22px] text-[12.3px] text-[#5d6371]">
          <div className="flex h-[37px] w-[145px] items-center rounded-[4px] border-l-[3.5px] border-[#3e80e8] bg-[#ecedf9] pl-[18px] pt-[1px] font-medium text-[#3b6fd6]">资产总览</div>
          <div className="mt-[5px] flex h-[44.5px] items-center pl-[22px]">API中心</div>
          <div className="flex h-[44.5px] items-center pl-[22px]">数据包监测中心</div>
        </aside>
        <main className="min-w-0 flex-1 bg-[#fbfcfe]">
          <div className="flex h-[66px] items-center justify-between border-b border-[#eef0f4] pl-[22px] pr-[22px]">
            <h1 className="text-[16.2px] font-medium text-[#2a2a2a]">资产总览</h1>
            <span className="text-[10.9px] text-[#c3c8da]">数据截止时间：2020-06-16</span>
          </div>
          <div className="flex h-[92px] items-start border-b-2 border-[#eceef2] pt-[17px]">
            <Stat cls="w-[381px] pl-[57px]" label="数据包" value="999" unit="个" rowCls="mt-[14px]" />
            <div className="-mt-[4px] h-[64px] w-px bg-[#eaecf1]" />
            <Stat cls="w-[355px] pl-[31px]" label="数据量" value="999" unit="行" rowCls="mt-[14px]" />
            <div className="-mt-[4px] h-[64px] w-px bg-[#eaecf1]" />
            <Stat cls="pl-[30px]" label="数据大小" value="12" unit="G" rowCls="mt-[10px]" />
          </div>
          <div className="flex flex-col gap-[21px] pl-[22px] pt-[20px]">
            <QualityCard />
            <div className="flex gap-[21px]">
              <EtlCard />
              <OutputCard />
            </div>
          </div>
        </main>
      </div>
    </section>
  );
}

/* ---------- change hint panel ---------- */

function Count({ cls }) {
  return <span className={"flex h-[35px] w-[86px] items-center justify-center rounded-full text-[23.6px] font-medium " + cls}>+323</span>;
}

function HintRow({ name, count, cls }) {
  return (
    <div className={"flex items-center justify-between pl-[25px] pr-[33px] text-[28.6px] font-medium text-[#3b4150] " + cls}>
      {name}
      <span className="text-[23.6px] font-normal text-[#b4b9c4]">{count}</span>
    </div>
  );
}

function HintGroup({ name, cls }) {
  return (
    <div className={"flex items-center justify-between pl-[13px] pr-[24px] text-[26.8px] text-[#a9a9ab] " + cls}>
      {name}
      <ChevronDown className="h-[19px] w-[19px] text-[#6c7383]" strokeWidth={3} />
    </div>
  );
}

function HintPanel() {
  return (
    <section className="absolute left-[1454px] top-[718px] flex h-[830px] w-[1170px] overflow-hidden bg-white">
      <div className="w-[324px] shrink-0 border-x-2 border-[#eceef2]">
        <HintRow name="数据库2" count="13" cls="h-[46px]" />
        <HintGroup name="按权限（3）" cls="mt-[44px] h-[41px]" />
        <HintRow name="私有数据" count="34" cls="mt-[25px] h-[100px]" />
        <HintRow name="专享数据" count="243" cls="h-[99px]" />
        <HintRow name="公共数据" count="144" cls="h-[99px]" />
        <HintGroup name="按主题库（999+）" cls="mt-[17px] h-[40px]" />
        <div className="mt-[26px] flex h-[100px] items-center justify-between pl-[25px] pr-[15px] text-[28.6px] font-medium text-[#3b4150]">
          人口主题库
          <Count cls="mt-[4px] bg-[#2fb380] text-white" />
        </div>
        <HintRow name="其它主题库..." count="" cls="h-[99px]" />
        <HintRow name="地理主题库..." count="999+" cls="h-[100px]" />
      </div>
      <div className="w-[320px] shrink-0" />
      <div className="flex-1 border-l-2 border-[#eceef2] bg-[#f7f8fa]" />
      <div className="absolute left-[221px] top-[640px] flex h-[138px] w-[641px] items-center rounded-[10px] border-2 border-[#eceef2] bg-[#f9fafc] pb-[4px] pl-[18px] text-[28.4px] text-[#c0c4d0] shadow-[0_14px_40px_rgba(60,70,90,0.2)]">
        <span className="font-medium text-[#3e80e8]">新增</span>
        <Count cls="ml-[20px] bg-[#2fb380] text-white" />
        <span className="ml-[34px]">警告</span>
        <Count cls="ml-[21px] bg-[#feebd0] text-[#eea20c]" />
        <span className="ml-[32px]">不合格</span>
        <Count cls="ml-[21px] bg-[#fae9eb] text-[#c4444c]" />
      </div>
      <svg viewBox="0 0 30 16" className="absolute left-[263px] top-[626px] h-[16px] w-[30px]">
        <path d="M0 15 L15 1 L30 15 V16 H0Z" fill="#f9fafc" />
        <path d="M0 15 L15 1 L30 15" fill="none" stroke="#e3e6ec" strokeWidth="1.5" />
      </svg>
    </section>
  );
}

export default function App() {
  return (
    <div className="relative h-[1595px] w-[2657px] overflow-hidden whitespace-nowrap bg-white font-['Inter','Noto_Sans_CJK_SC',sans-serif] leading-none">
      <Dashboard />
      <MapPanel />
      <FilterPanel />
      <SearchPanel />
      <HintPanel />
      <Note className="left-[480px] top-[492px] h-[187px] w-[419px] border-[#cfc6c4] bg-[#ffe4dd] pt-[28px] text-[#fdae98]" lines={["只能搜索某一分类下的数", "据，且数据维度单一，扩展", "性差"]} />
      <Note className="left-[1157px] top-[511px] h-[188px] w-[420px] border-[#c9c9bf] bg-[#fefadb] pt-[28px] text-[#b0a75c]" lines={["左右分栏及分组提高导航扩", "展性，快速筛选以分检数据", "包"]} />
      <Note className="left-[2187px] top-[511px] h-[188px] w-[420px] border-[#c9c9bf] bg-[#fefadb] pt-[28px] text-[#b0a75c]" lines={["增加全局搜索，搜索时即可", "查看数据包状态"]} />
      <Note className="left-[977px] top-[1361px] h-[188px] w-[420px] border-[#c9c9bf] bg-[#fefadb] pt-[28px] text-[#b0a75c]" lines={["同时资产总览也可看到各种", "监控状态，方便处理不合格", "数据"]} />
      <Note className="left-[2389px] top-[1473px] h-[96px] w-[250px] border-[#c9c9bf] bg-[#fefadb] pt-[28px] text-[#b0a75c]" lines={["变化提示之一"]} />
    </div>
  );
}
